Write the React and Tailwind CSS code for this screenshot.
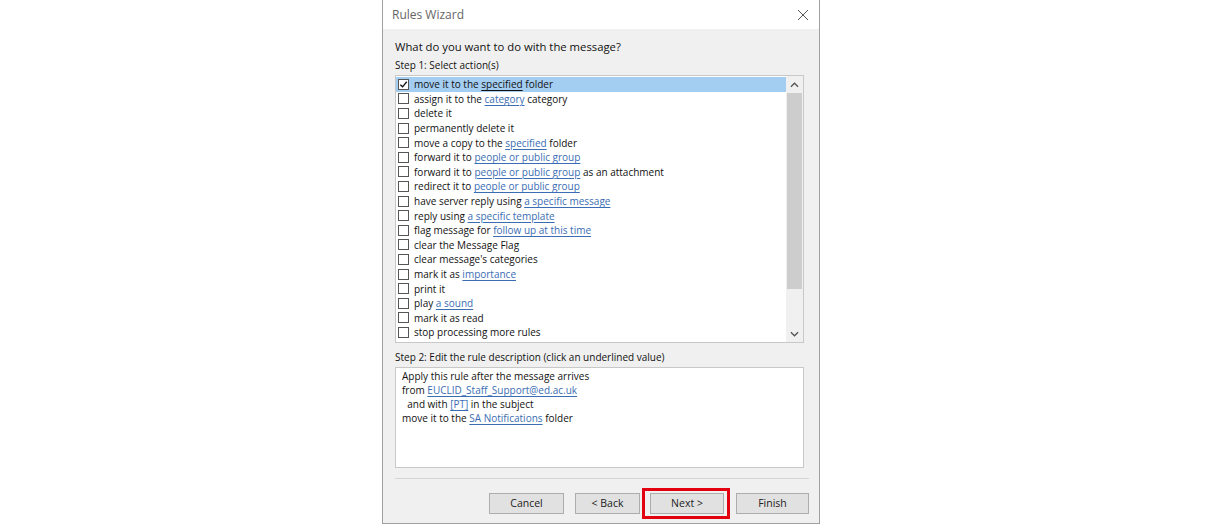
import React from 'react'

const actions = [
    [['move it to the '], ['specified', 'sel'], [' folder']],
    [['assign it to the '], ['category', 'link'], [' category']],
    [['delete it']],
    [['permanently delete it']],
    [['move a copy to the '], ['specified', 'link'], [' folder']],
    [['forward it to '], ['people or public group', 'link']],
    [['forward it to '], ['people or public group', 'link'], [' as an attachment']],
    [['redirect it to '], ['people or public group', 'link']],
    [['have server reply using '], ['a specific message', 'link']],
    [['reply using '], ['a specific template', 'link']],
    [['flag message for '], ['follow up at this time', 'link']],
    [['clear the Message Flag']],
    [["clear message's categories"]],
    [['mark it as '], ['importance', 'link']],
    [['print it']],
    [['play '], ['a sound', 'link']],
    [['mark it as read']],
    [['stop processing more rules']],
]

const description = [
    [['Apply this rule after the message arrives']],
    [['from '], ['EUCLID_Staff_Support@ed.ac.uk', 'link']],
    [['\u00a0\u00a0and with '], ['[PT]', 'link'], [' in the subject']],
    [['move it to the '], ['SA Notifications', 'link'], [' folder']],
]

const Parts = ({ parts }) =>
    parts.map(([text, kind], i) => {
        if (kind === 'link') return <span key={i} className="text-[#3a6db3] underline underline-offset-2">{text}</span>
        if (kind === 'sel') return <span key={i} className="underline underline-offset-2">{text}</span>
        return <span key={i}>{text}</span>
    })

const Checkbox = ({ checked }) => (
    <span className="flex h-[11px] w-[11px] shrink-0 items-center justify-center border border-[#555] bg-white">
        {checked && (
            <svg viewBox="0 0 10 10" className="h-[9px] w-[9px]">
                <path d="M1.5 5.2 L4 7.6 L8.6 2" fill="none" stroke="#111" strokeWidth="1.5" />
            </svg>
        )}
    </span>
)

const Button = ({ width, children }) => (
    <button className={`h-[21px] shrink-0 border border-[#adadad] bg-[#e1e1e1] text-[10.5px] text-[#222] ${width}`}>{children}</button>
)

export default function App() {
    return (
        <div className="flex h-[527px] w-full justify-center bg-white font-['Open_Sans',sans-serif] text-[10px] text-[#111]">
            <div className="ml-[-13px] flex h-[524px] w-[438px] flex-col border-x border-b border-[#a0a0a0] bg-[#f0f0f0]">
                <div className="flex h-[29px] shrink-0 items-center justify-between bg-white pl-[9px] pr-[10px]">
                    <span className="text-[12px] text-[#666]">Rules Wizard</span>
                    <svg viewBox="0 0 12 12" className="h-[12px] w-[12px]">
                        <path d="M1 1 L11 11 M11 1 L1 11" stroke="#555" strokeWidth="1" />
                    </svg>
                </div>

                <div className="flex flex-col px-[12px]">
                    <div className="mt-[9px] text-[11.3px] leading-[18px]">What do you want to do with the message?</div>
                    <div className="leading-[18px]">Step 1: Select action(s)</div>

                    <div className="mt-[1px] flex h-[268px] w-[409px] border border-[#c8c8c8] bg-white">
                        <div className="flex flex-1 flex-col pt-[1px]">
                            {actions.map((parts, i) => (
                                <div
                                    key={i}
                                    className={`flex h-[14.6px] items-center gap-[5px] pl-[2px] leading-none ${i === 0 ? 'bg-[#a4cdf2]' : ''}`}
                                >
                                    <Checkbox checked={i === 0} />
                                    <span className="whitespace-nowrap">
                                        <Parts parts={parts} />
                                    </span>
                                </div>
                            ))}
                        </div>
                        <div className="flex w-[17px] flex-col bg-[#f0f0f0]">
                            <div className="flex h-[17px] items-center justify-center">
                                <svg viewBox="0 0 10 6" className="h-[6px] w-[9px]">
                                    <path d="M1 5 L5 1 L9 5" fill="none" stroke="#555" strokeWidth="1.4" />
                                </svg>
                            </div>
                            <div className="mx-[1px] h-[196px] bg-[#cdcdcd]" />
                            <div className="flex-1" />
                            <div className="flex h-[17px] items-center justify-center">
                                <svg viewBox="0 0 10 6" className="h-[6px] w-[9px]">
                                    <path d="M1 1 L5 5 L9 1" fill="none" stroke="#555" strokeWidth="1.4" />
                                </svg>
                            </div>
                        </div>
                    </div>

                    <div className="mt-[5px] leading-[18px]">Step 2: Edit the rule description (click an underlined value)</div>
                    <div className="mt-[1px] h-[101px] w-[409px] border border-[#c8c8c8] bg-white px-[6px] pt-[1px]">
                        {description.map((parts, i) => (
                            <div key={i} className="whitespace-nowrap leading-[14px]">
                                <Parts parts={parts} />
                            </div>
                        ))}
                    </div>

                    <div className="mt-[10px] h-px w-[414px] bg-[#d5d5d5]" />

                    <div className="mt-[14px] flex pl-[94px]">
                        <Button width="w-[75px]">Cancel</Button>
                        <div className="ml-[11px] shrink-0"><Button width="w-[65px]">&lt; Back</Button></div>
                        <div className="relative ml-[10px] shrink-0">
                            <Button width="w-[74px]">Next &gt;</Button>
                            <span className="pointer-events-none absolute -bottom-[5px] -left-[8px] -right-[6px] -top-[5px] border-[3px] border-[#e3000f]" />
                        </div>
                        <div className="ml-[12px] shrink-0"><Button width="w-[73px]">Finish</Button></div>
                    </div>
                </div>
            </div>
        </div>
    )
}
